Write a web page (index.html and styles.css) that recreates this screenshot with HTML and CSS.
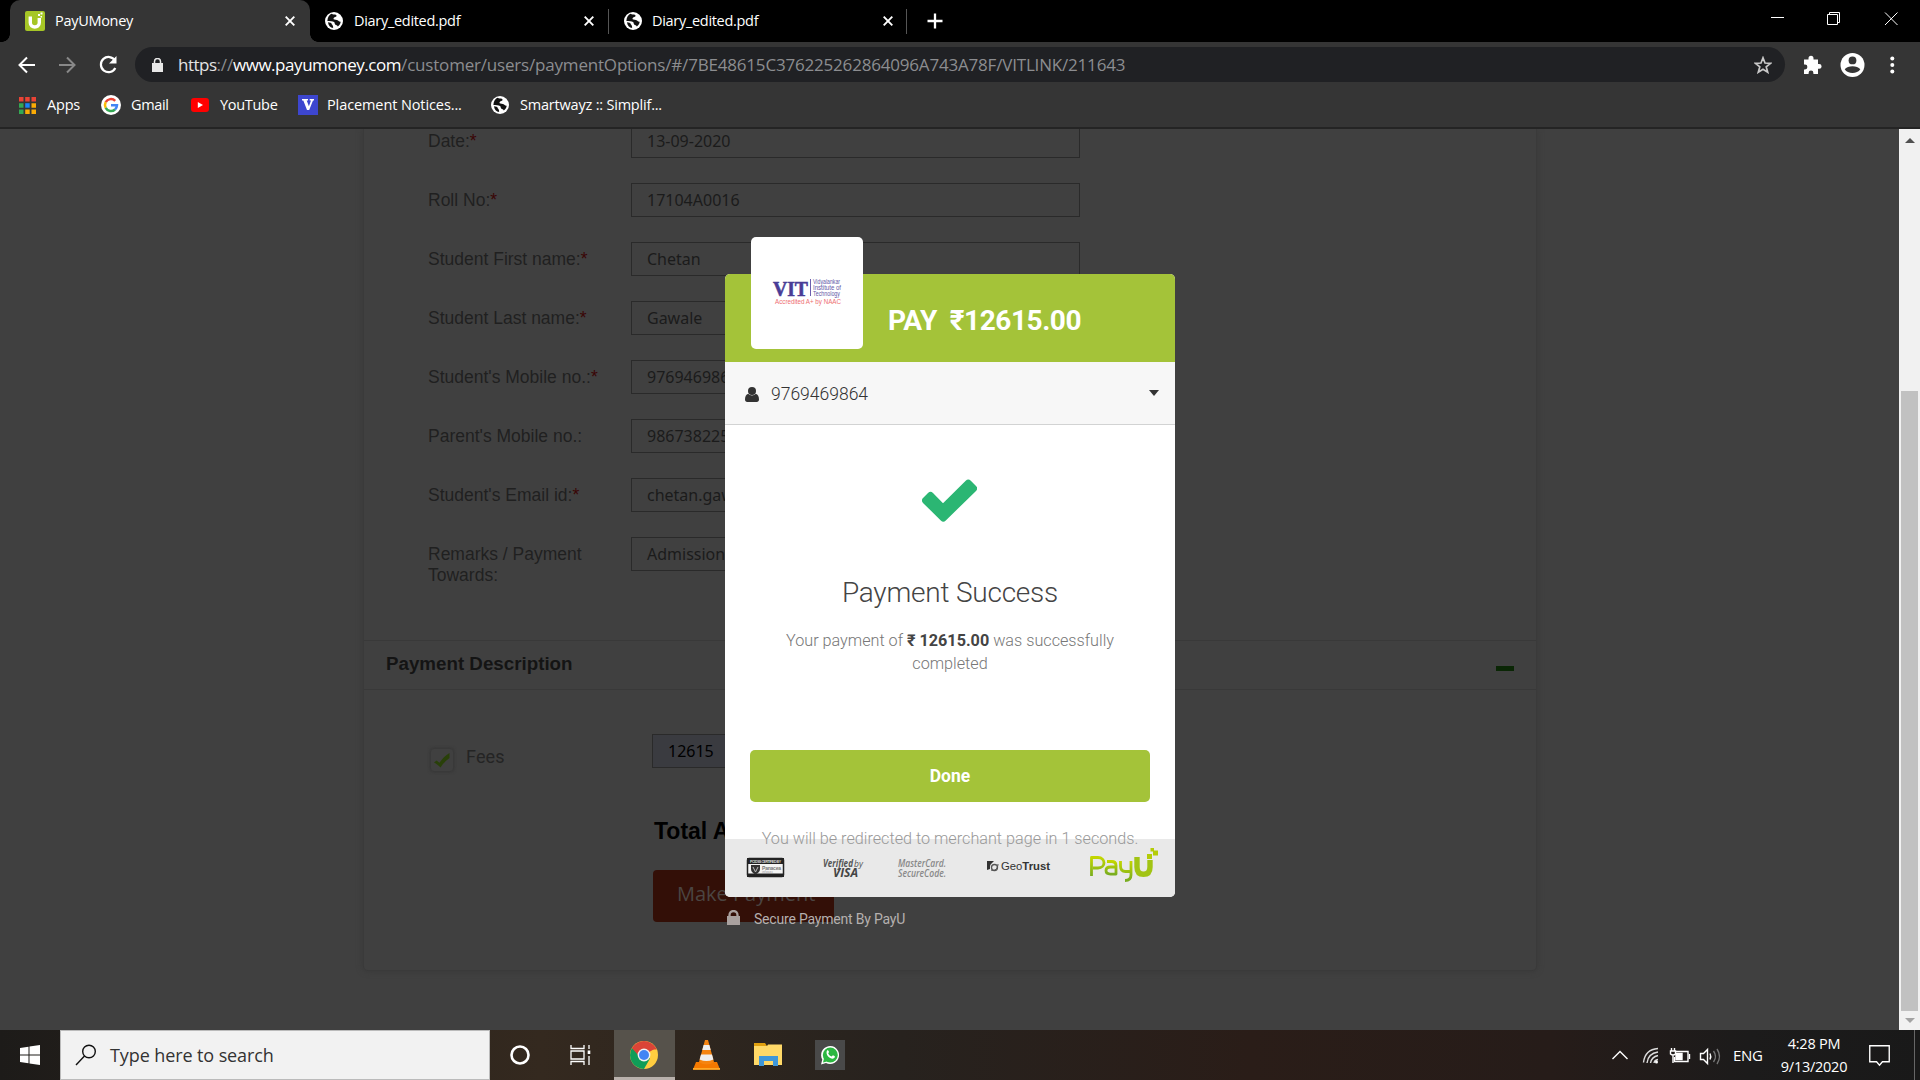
FILE: index.html
```html
<!DOCTYPE html>
<html lang="en">
<head>
<meta charset="utf-8">
<title>PayUMoney</title>
<link rel="stylesheet" href="styles.css">
</head>
<body>
<svg width="0" height="0" class="defs">
  <defs>
    <symbol id="globe" viewBox="0 0 18 18"><circle cx="9" cy="9" r="9" fill="#fff"/><path d="M6.2 1.8C8 3 11 2 11.5 3.6c.4 1.6-2.6 1.4-3 3-.3 1.200 1.700 1 3.500 1.300 1.800.4 1.600 2 3.700 1.800-.3 2-1.300 3.600-2.900 4.700-.3-1.400-1.800-1-2.600-1.900-.8-1-.2-1.900-1.200-2.600-1.400-1-3.800-.4-6.600-1 .1-3.400 1.700-5.800 3.800-7.100z" fill="#111"/><path d="M3 10.200c2 .2 3.300.4 3.600 1.600.3 1.200 1.800 1.400 1.500 4.200C5.400 15.600 3.300 13.400 3 10.200z" fill="#111"/><path d="M12.300 2.700c1.700 1 2.700 2.300 3.200 4.200-1.800.6-3.600-.6-3.200-2z" fill="#fff"/></symbol>
    <symbol id="close" viewBox="0 0 10 10"><path d="M.7.7l8.600 8.600M9.300.7L.7 9.300" stroke="#fff" stroke-width="1.900" fill="none"/></symbol>
    <linearGradient id="payu" x1="0" y1="0" x2="0" y2="1"><stop offset="0" stop-color="#c3d600"/><stop offset="1" stop-color="#79ad20"/></linearGradient>
  </defs>
</svg>
<div class="screen">
  <header class="tabs">
    <div class="tab active">
      <svg class="fav" viewBox="0 0 20 20"><rect width="20" height="20" rx="2" fill="#a6c626"/><path d="M5.300 5.500v6.300c0 5.500 9 5.500 9 0V7" fill="none" stroke="#fff" stroke-width="3.400"/><path d="M13 3h2v2h-2zM15.500 1.500h2v2h-2zM15.500 5h1.500v1.500h-1.500z" fill="#fff"/></svg>
      <span class="t1">PayUMoney</span><svg class="x"><use href="#close"/></svg>
    </div>
    <div class="tab second"><svg class="globe"><use href="#globe"/></svg><span>Diary_edited.pdf</span><svg class="x"><use href="#close"/></svg></div>
    <div class="tab third"><svg class="globe"><use href="#globe"/></svg><span>Diary_edited.pdf</span><svg class="x"><use href="#close"/></svg></div>
    <svg class="plus" viewBox="0 0 16 16"><path d="M8 .5v15M.5 8h15" stroke="#fff" stroke-width="2.300"/></svg>
    <svg class="wincontrols" viewBox="0 0 130 16" fill="none" stroke="#fff"><path d="M1 6.500h13M57.500 3.500h10v10h-10zM59.500 3.500v-2h10v10h-2M115 1.500l12.500 12.500M127.500 1.500L115 14"/></svg>
  </header>

  <nav class="toolbar">
    <svg class="navicons" viewBox="0 0 100 20" fill="none" stroke-width="2"><path d="M17 10H2M9 2.500L1.500 10 9 17.500" stroke="#fff"/><path d="M41 10h15M49 2.500l7.500 7.500-7.500 7.500" stroke="#888"/><path d="M97 5.600A7.600 7.600 0 1 0 97.300 13" stroke="#fff" stroke-width="2.200"/><path d="M98.500 1v7.500H91z" fill="#fff"/></svg>
    <div class="omnibox">
      <svg class="lock" viewBox="0 0 11 14"><path d="M0 5h11v9H0z" fill="#e8e8e8"/><path d="M2.500 6V3.500a3 3 0 0 1 6 0V6" fill="none" stroke="#e8e8e8" stroke-width="1.500"/></svg>
      <span class="url"><span class="scheme">https</span>://<b>www.payumoney.com</b>/customer/users/paymentOptions/#/7BE48615C376225262864096A743A78F/VITLINK/211643</span>
      <svg class="star" viewBox="0 0 18 18"><path d="M9 1.800l2 5.200 5.500.3-4.300 3.500 1.500 5.400L9 13.200l-4.700 3 1.500-5.400L1.500 7.300 7 7z" fill="none" stroke="#c8c8c8" stroke-width="1.700"/></svg>
    </div>
    <svg class="toolicons" viewBox="0 0 96 24" fill="#fff"><path d="M1 6.500h4.500V5.300a2.500 2.500 0 0 1 5 0v1.200H15V11h1.200a2.400 2.400 0 0 1 0 4.800H15V21h-4.600v-1a2.400 2.400 0 0 0-4.800 0v1H1v-4.600h1a2.400 2.400 0 0 0 0-4.800H1z"/><circle cx="49.500" cy="12" r="12"/><circle cx="49.500" cy="7.400" r="3.900" fill="#353535"/><path d="M41.700 16.200c3-4 12.600-4 15.600 0-3 5-12.600 5-15.600 0z" fill="#353535"/><circle cx="89.300" cy="5.500" r="2"/><circle cx="89.300" cy="12" r="2"/><circle cx="89.300" cy="18.500" r="2"/></svg>
  </nav>

  <nav class="bookmarks">
    <a class="b1"><svg viewBox="0 0 17 17"><path d="M0 0h4.500v4.500H0zM6.200 0h4.500v4.500H6.200zM12.500 0H17v4.500h-4.500z" fill="#ea4335"/><path d="M0 6.200h4.500v4.500H0zM0 12.500h4.500V17H0z" fill="#34a853"/><path d="M6.200 6.200h4.500v4.500H6.200z" fill="#1a84f8"/><path d="M12.500 6.200H17v4.500h-4.500zM6.200 12.500h4.500V17H6.200zM12.500 12.500H17V17h-4.500z" fill="#fbab05"/></svg><span>Apps</span></a>
    <a class="b2"><svg viewBox="0 0 20 20"><circle cx="10" cy="10" r="10" fill="#fff"/><g fill="none" stroke-width="2.500"><path d="M14.200 5.800A6 6 0 0 0 4.700 7.200" stroke="#ea4335"/><path d="M4.700 7.200a6 6 0 0 0 0 5.600" stroke="#fbbc05"/><path d="M4.700 12.800a6 6 0 0 0 9.300 1.700" stroke="#34a853"/><path d="M14 14.500a6 6 0 0 0 2-4.300h-6" stroke="#4285f4"/></g></svg><span>Gmail</span></a>
    <a class="b3"><svg viewBox="0 0 18 14"><rect width="18" height="14" rx="3" fill="#f00"/><path d="M6.800 4v6L12 7z" fill="#fff"/></svg><span>YouTube</span></a>
    <a class="b4"><svg viewBox="0 0 20 20"><rect width="20" height="20" fill="#3d46cf"/><path d="M4 4h6v1.500H8.700l2.200 5.800 2.100-5.800h-1.300V4H16v1.500h-1L11.200 15H9L5.300 5.500H4z" fill="#fff"/></svg><span>Placement Notices...</span></a>
    <a class="b5"><svg><use href="#globe"/></svg><span>Smartwayz :: Simplif...</span></a>
  </nav>

  <main class="page">
    <section class="panel">
      <form class="fields">
        <div class="row"><label>Date:<i>*</i></label><div class="input">13-09-2020</div></div>
        <div class="row"><label>Roll No:<i>*</i></label><div class="input">17104A0016</div></div>
        <div class="row"><label>Student First name:<i>*</i></label><div class="input">Chetan</div></div>
        <div class="row"><label>Student Last name:<i>*</i></label><div class="input">Gawale</div></div>
        <div class="row"><label>Student's Mobile no.:<i>*</i></label><div class="input">9769469864</div></div>
        <div class="row"><label>Parent's Mobile no.:</label><div class="input">986738225</div></div>
        <div class="row"><label>Student's Email id:<i>*</i></label><div class="input">chetan.gaw</div></div>
        <div class="row"><label>Remarks / Payment Towards:</label><div class="input">Admission</div></div>
      </form>
      <div class="description"><h2>Payment Description</h2><span class="minus"></span></div>
      <div class="fees">
        <span class="checkbox"><svg viewBox="0 0 16 15"><path d="M0 9.500l2.500-2 3 2.300C8 6 11.500 2.200 15.500 0v5C12 7.500 9 10.500 6.500 14.500 4.500 12.500 2.500 10.500 0 9.500z" fill="#294009"/></svg></span>
        <span class="fees-label">Fees</span>
        <div class="input amount">12615</div>
      </div>
      <div class="total">Total Amount</div>
      <div class="make">Make Payment</div>
    </section>
    <aside class="scrollbar"><span class="up"></span><div class="thumb"></div><span class="down"></span></aside>

    <div class="modal">
      <div class="modal-head"><div class="tile"><svg viewBox="0 0 112 112"><text x="22" y="59" textLength="35" lengthAdjust="spacingAndGlyphs" class="vit">VIT</text><path d="M59.500 42v17" stroke="#6c5fae"/><g class="vit-name"><text x="62" y="47" textLength="27" lengthAdjust="spacingAndGlyphs">Vidyalankar</text><text x="62" y="53" textLength="28" lengthAdjust="spacingAndGlyphs">Institute of</text><text x="62" y="59" textLength="27" lengthAdjust="spacingAndGlyphs">Technology</text></g><text x="24" y="67" textLength="66" lengthAdjust="spacingAndGlyphs" class="vit-sub">Accredited A+ by NAAC</text></svg></div><h1>PAY&nbsp; ₹12615.00</h1></div>
      <div class="user"><svg class="person" viewBox="0 0 14 15"><circle cx="7" cy="4" r="4"/><path d="M3.300 6.800C1 7.500 0 9.500 0 12.500 0 14 .8 15 2.300 15h9.400c1.500 0 2.300-1 2.300-2.500 0-3-1-5-3.300-5.700-2 2.100-5.400 2.100-7.400 0z"/></svg><span>9769469864</span><i class="caret"></i></div>
      <div class="modal-body">
        <svg class="check" viewBox="0 0 55 42"><path d="M1 18.600l5-5c1.700-1.700 3.400-1.700 5 0l10 10.200L43.700 1.200c1.700-1.600 3.500-1.600 5.100 0l5.200 5.200c1.600 1.600 1.600 3.300 0 5L23.800 41c-1.700 1.600-3.300 1.600-5 0L1 23.400c-1.500-1.600-1.500-3.200 0-4.800z" fill="#2bb673"/></svg>
        <h3>Payment Success</h3>
        <p class="message">Your payment of <b>₹ 12615.00</b> was successfully<br>completed</p>
        <button>Done</button>
        <p class="redirect">You will be redirected to merchant page in 1 seconds.</p>
      </div>
      <div class="badges">
        <svg viewBox="0 0 450 57">
          <rect x="22.500" y="19.500" width="36" height="18" rx="1.500" fill="#f4f4f4" stroke="#222" stroke-width="1.500"/><path d="M22 19h37v6H22zM22 34.500h37V38H22z" fill="#222"/><text x="25" y="24" class="micro" textLength="31">PCI DSS CERTIFIED BY</text><path d="M26 26h9v4c0 3-2 4-4.500 5.500C28 34 26 33 26 30z" fill="#333"/><path d="M28 28l2.500 5 2.500-5" fill="none" stroke="#bbb"/><text x="37" y="30.500" class="pan" textLength="19">Panacea</text><text x="37" y="34" class="pan2" textLength="11">infosec</text>
          <text x="98" y="28" class="verified" textLength="30" lengthAdjust="spacingAndGlyphs">Verified</text><text x="129" y="28" class="by" textLength="9">by</text><text x="108" y="37.500" class="visa" textLength="25" lengthAdjust="spacingAndGlyphs">VISA</text>
          <text x="173" y="28" class="mc" textLength="48" lengthAdjust="spacingAndGlyphs">MasterCard.</text><text x="173" y="37.500" class="mc" textLength="48" lengthAdjust="spacingAndGlyphs">SecureCode.</text>
          <path d="M262 22h7l-2.500 2.500c-1.600 1.300-1.500 3-1.500 5.500l-3 1z" fill="#333"/><circle cx="269.500" cy="28.500" r="3" fill="none" stroke="#555" stroke-width="1.300"/><path d="M266 31c4 2 7-2 7-6" fill="none" stroke="#555"/><text x="276" y="31" class="geo" textLength="49" lengthAdjust="spacingAndGlyphs">Geo<tspan font-weight="700">Trust</tspan></text>
          <g fill="none" stroke="url(#payu)" stroke-width="2.800" stroke-linejoin="round"><path d="M366.500 37V18.500h6.500c8 0 8 10.500 0 10.500h-5"/><path d="M382 22.500h4.500q4.500 0 4.500 4v8.600h-5.500q-4.500 0-4.500-3.500 0-3.600 4.500-3.600h5"/><path d="M395.500 22v5q0 5.500 5 5.500h5.500M406 22v14q0 5.500-6 5.500"/></g><path d="M412 18v10q0 7.300 6.500 7.300t6.500-7.300v-7" fill="none" stroke="#a2c414" stroke-width="5.400"/><path d="M422 15h5v5h-5zM428 11.500h5v5h-5zM425.500 9h3.500v3.500h-3.500z" fill="#b4cc08"/>
        </svg>
      </div>
    </div>
    <div class="secure"><svg viewBox="0 0 13 15"><path d="M0 6h13v9H0z" fill="#a9a19f"/><path d="M2.500 7V5a4 4 0 0 1 8 0v2" fill="none" stroke="#a9a19f" stroke-width="2.300"/></svg><span>Secure Payment By PayU</span></div>
  </main>

  <footer class="taskbar">
    <div class="start"><svg viewBox="0 0 20 20" fill="#fff"><path d="M0 3l8.500-1.300v7.800H0zM9.500 1.500L20 0v9.500H9.500zM0 10.500h8.500v7.800L0 17zM9.500 10.500H20V20L9.500 18.500z"/></svg></div>
    <div class="search"><svg viewBox="0 0 22 22" fill="none" stroke="#111" stroke-width="1.400"><circle cx="14" cy="7.500" r="6.300"/><path d="M9.500 12L1 21"/></svg><span>Type here to search</span></div>
    <div class="slot"><svg width="20" height="20"><circle cx="10" cy="10" r="8.500" fill="none" stroke="#fff" stroke-width="2.600"/></svg></div>
    <div class="slot"><svg width="22" height="20" fill="none" stroke="#fff" stroke-width="1.300"><path d="M1 0v3.500h13V0M1 20v-3.500h13V20M1 6h13v8H1zM19 0v4M19 11v9"/><path d="M19 5.500v3.500" stroke-width="2.600"/></svg></div>
    <div class="slot current"><svg width="28" height="28" viewBox="0 0 28 28"><circle cx="14" cy="14" r="14" fill="#ffcd40"/><path d="M14 14L1.880 7A14 14 0 0 0 14 28l6-10.500z" fill="#0f9d58"/><path d="M14 14H8L1.880 7a14 14 0 0 1 24.240 0z" fill="#db4437"/><path d="M14 7h12.100l.6 1.400H14z" fill="#db4437"/><circle cx="14" cy="14" r="6.400" fill="#f1f1f1"/><circle cx="14" cy="14" r="5" fill="#4285f4"/></svg></div>
    <div class="slot app"><svg width="27" height="30" viewBox="0 0 27 30"><path d="M3 22h21l3 7.500H0z" fill="#f57900"/><path d="M0 28h27v1.800H0z" fill="#ffa826"/><path d="M12 0h3l6 22q-7.500 5-15 0z" fill="#f58410"/><path d="M10.600 5h5.800l1.300 5H9.300zM8 14.500h11l1.400 5q-7 3-13.800 0z" fill="#eee"/></svg></div>
    <div class="slot app"><svg width="28" height="24" viewBox="0 0 28 24"><path d="M0 0h11l2 3H0z" fill="#e0a010"/><path d="M0 3h13l1-1.500h14V22H0z" fill="#ffd968"/><path d="M5 13h19v10h-5v-5h-9v5H5z" fill="#3f97d9"/></svg></div>
    <div class="slot app"><svg width="30" height="30" viewBox="0 0 30 30"><rect width="30" height="30" fill="#494949"/><path d="M6 24.500l1.300-5A9 9 0 1 1 11 23z" fill="#fff"/><circle cx="15.300" cy="15" r="7.500" fill="#2cb742"/><path d="M8 22.600l1-4 3 3z" fill="#2cb742"/><path d="M12 10.500c1-.7 1.600 0 2 1.600l-.8 1.300c.8 1.600 2 2.500 3.400 3.100l1.300-1.300c1.800.6 2.500 1 1.800 2.400-2 3.200-10.200-1.500-7.700-7.100z" fill="#fff"/></svg></div>
    <svg class="tray" viewBox="0 0 120 24" fill="none" stroke="#fff" stroke-width="1.400"><path d="M4.500 16l7.500-7.500 7.500 7.500"/><g stroke="#ddd"><path d="M35.500 19.500Q37 6.500 50 5.500M39 20q1-9.500 11-11M42.500 20q1-6 7.500-7.500M46 20q.5-3 4-3.500"/></g><circle cx="48.500" cy="19" r="1.500" fill="#fff" stroke="none"/><path d="M67 8.500h13v10H66.500V14"/><path d="M68 10.500h6v6h-6z" fill="#fff"/><path d="M81.500 11v5M62.500 8h5v3q-2.500 2-5 0zM63.500 5v3M66.500 5v3M65 12v8"/><path d="M92.500 10.500h3l4-4v14l-4-4h-3zM102 10.500q1.500 3 0 6"/><path d="M105.500 8q4 5.500 0 11M109 6q5 7.500 0 15" stroke="#777"/></svg>
    <span class="eng">ENG</span>
    <div class="clock"><span>4:28 PM</span><span>9/13/2020</span></div>
    <svg class="notice" viewBox="0 0 20 21" fill="none" stroke="#fff" stroke-width="1.300"><path d="M.7.700h18.600V16h-6.500L10 19.300 7.200 16H.7z"/></svg>
    <span class="peek"></span>
  </footer>
</div>
</body>
</html>
```
FILE: styles.css
```css
* { box-sizing: border-box; }
body { margin: 0; background: #404040; }
h1, h2, h3, p { margin: 0; }
svg { display: block; flex: none; }
.defs { position: absolute; }
.screen { width: 1920px; height: 1080px; overflow: hidden; display: flex; flex-direction: column; font-family: "Open Sans", "Noto Sans", sans-serif; color: #fff; }

.tabs { height: 42px; flex: none; background: #000; display: flex; align-items: center; padding-left: 10px; font-size: 14.5px; letter-spacing: -0.3px; }
.tab { height: 42px; display: flex; align-items: center; position: relative; }
.tab span { flex: 1; white-space: nowrap; margin-top: -2px; }
.active { width: 300px; background: #353535; border-radius: 10px 10px 0 0; padding: 0 15px; }
.active::before, .active::after { content: ""; position: absolute; bottom: 0; width: 8px; height: 8px; }
.active::before { left: -8px; background: radial-gradient(circle at 0 0, transparent 7.5px, #353535 8px); }
.active::after { right: -8px; background: radial-gradient(circle at 100% 0, transparent 7.5px, #353535 8px); }
.fav { width: 20px; height: 20px; margin-right: 10px; }
.globe { width: 18px; height: 18px; margin-right: 11px; }
.x { width: 10px; height: 10px; }
.second { width: 299px; padding: 0 15px; }
.third { width: 298px; padding: 0 14px 0 15px; }
.third .globe { margin-right: 10px; }
.second::after, .third::after { content: ""; position: absolute; right: 0; top: 9px; width: 1px; height: 25px; background: #555; }
.plus { width: 16px; height: 16px; margin-left: 20px; }
.wincontrols { width: 130px; height: 16px; margin: -5px 20px 0 auto; }

.toolbar { height: 45px; flex: none; background: #353535; display: flex; align-items: center; padding: 0 20px 0 18px; }
.navicons { width: 100px; height: 20px; margin-right: 17px; }
.omnibox { width: 1650px; height: 35px; border-radius: 18px; background: #202124; display: flex; align-items: center; padding: 0 13px 0 17px; }
.lock { width: 11px; height: 14px; margin-right: 15px; }
.url { flex: 1; white-space: nowrap; font-size: 17px; letter-spacing: -0.19px; color: #8c8d90; margin-top: -1px; }
.url b { font-weight: 400; letter-spacing: -0.45px; color: #fff; }
.scheme { color: #e4e4e4; letter-spacing: -0.5px; }
.star { width: 18px; height: 18px; }
.toolicons { width: 96px; height: 24px; margin-left: 18px; }

.bookmarks { height: 42px; flex: none; background: #353535; border-bottom: 2px solid #242424; display: flex; align-items: center; padding: 0 0 4px 19px; font-size: 14.5px; letter-spacing: -0.2px; }
.bookmarks a { display: flex; align-items: center; white-space: nowrap; }
.bookmarks span { margin-top: -2px; }
.b1 { width: 82px; } .b1 svg { width: 17px; height: 17px; margin-right: 11px; }
.b2 { width: 90px; letter-spacing: -0.35px; } .b2 svg { width: 20px; height: 20px; margin-right: 10px; }
.b3 { width: 107px; letter-spacing: -0.3px; } .b3 svg { width: 18px; height: 14px; margin-right: 11px; }
.b4 { width: 193px; letter-spacing: -0.1px; } .b4 svg { width: 20px; height: 20px; margin-right: 9px; }
.b5 svg { width: 18px; height: 18px; margin-right: 11px; }

.page { height: 901px; flex: none; background: #404040; position: relative; display: flex; overflow: hidden; }
.panel { width: 1174px; height: 842px; margin-left: 363px; border: 1px solid #3a3a3a; border-top: 0; border-radius: 0 0 5px 5px; box-shadow: 0 0 6px #383838; }
.fields { height: 511px; padding-left: 64px; margin-top: -5px; }
.row { height: 59px; display: flex; align-items: flex-start; }
.row label { width: 203px; padding: 7px 40px 0 0; font: 17.5px/21px "Liberation Sans", Arial, sans-serif; color: #202020; white-space: nowrap; }
.row:last-child label { white-space: normal; padding-right: 20px; }
.row i { font-style: normal; color: #3a0505; }
.input { width: 449px; height: 34px; border: 1px solid #2a2a2a; padding: 0 15px; font: 16px/33px "Noto Sans", sans-serif; color: #1b1b1b; }
.description { height: 50px; margin-top: 5px; border: solid #393939; border-width: 1px 0; padding: 0 22px 2px; display: flex; align-items: center; justify-content: space-between; }
.description h2 { font: bold 18.75px/22px "Liberation Sans", Arial, sans-serif; color: #141414; }
.minus { width: 18px; height: 5px; background: #0a2605; margin-top: 8px; }
.fees { display: flex; padding: 44px 0 0 66px; }
.checkbox { width: 24px; height: 24px; margin: 14px 12px 0 0; border: 1px solid #393939; border-radius: 4px; box-shadow: 0 0 3px #333; padding: 4px 3px; }
.checkbox svg { width: 16px; height: 15px; }
.fees-label { width: 186px; font: 18px/22px Roboto, sans-serif; letter-spacing: .15px; color: #242424; padding-top: 12px; }
.amount { background: #3a3b40; color: #000; }
.total { font: bold 23px/28px "Liberation Sans", Arial, sans-serif; color: #000; margin: 45px 0 0 290px; }
.make { width: 181px; height: 52px; margin: 25px 0 0 289px; border-radius: 4px; background: #330f07; color: #4b4542; font: 20px/48px "Open Sans", sans-serif; padding-left: 24px; white-space: nowrap; }
.scrollbar { width: 21px; margin-left: auto; background: #f1f1f1; display: flex; flex-direction: column; align-items: center; justify-content: space-between; padding: 9px 0 7px; }
.up, .down { border: solid transparent; border-width: 0 5px 5px; border-bottom-color: #505050; }
.down { border-width: 5px 5px 0; border-top-color: #a3a3a3; }
.thumb { width: 17px; height: 620px; margin-top: 241px; background: #c1c1c1; }

.modal { position: absolute; left: 725px; top: 145px; width: 450px; height: 623px; border-radius: 5px; background: #fff; font-family: Roboto, sans-serif; }
.modal-head { height: 88px; background: #a4c339; border-radius: 5px 5px 0 0; display: flex; padding-left: 26px; }
.tile { width: 112px; height: 112px; margin: -37px 25px 0 0; border-radius: 5px; background: #fff; }
.vit { font: bold 22px "Liberation Serif", serif; fill: #493c96; stroke: #493c96; stroke-width: .6px; }
.vit-name { font: 7px "Liberation Sans", sans-serif; fill: #6257a6; }
.vit-sub { font: 7px "Liberation Sans", sans-serif; fill: #ee6e72; }
.modal h1 { font-size: 28px; line-height: 33px; font-weight: 700; letter-spacing: -.45px; padding-top: 30px; white-space: nowrap; }
.user { height: 63px; background: #f7f7f7; border-bottom: 1px solid #d2d3d3; display: flex; align-items: center; padding: 0 16px 0 20px; color: #333; font-size: 17.5px; font-weight: 300; }
.user span { margin-top: 2px; }
.person { width: 14px; height: 15px; margin: 3px 12px 0 0; fill: #333; }
.caret { margin-left: auto; border: solid transparent; border-width: 6px 5.500px 0; border-top-color: #333; }
.modal-body { height: 414px; padding: 54px 25px 0; text-align: center; position: relative; z-index: 1; }
.check { width: 55px; height: 43px; margin: 0 0 0 172px; }
.modal h3 { font-size: 28px; line-height: 34px; font-weight: 300; letter-spacing: -.22px; color: #444; margin-top: 54px; }
.message { margin-top: 19px; font-size: 16.2px; line-height: 23px; font-weight: 300; color: #777; }
.message b { font-weight: 700; color: #444; }
.modal button { display: block; width: 400px; height: 52px; margin: 75px 0 0; padding: 0; border: 0; border-radius: 5px; background: #a4c339; color: #fff; font: 700 17.5px Roboto, sans-serif; }
.redirect { margin-top: 25px; font-size: 16.2px; line-height: 23px; font-weight: 300; color: #999; white-space: nowrap; }
.badges { height: 58px; background: #e9e9e9; border-radius: 0 0 5px 5px; }
.badges svg { width: 450px; height: 57px; }
.micro { font: bold 3.500px "Liberation Sans", sans-serif; fill: #ddd; }
.pan { font: bold 5px "Liberation Sans", sans-serif; fill: #777; }
.pan2 { font: 3px "Liberation Sans", sans-serif; fill: #888; }
.verified { font: italic bold 10px "Open Sans", sans-serif; fill: #555; }
.by { font: italic 8.500px "Open Sans", sans-serif; fill: #555; }
.visa { font: italic bold 11.500px "Open Sans", sans-serif; fill: #444; }
.mc { font: italic 600 10px "Open Sans", sans-serif; fill: #888; }
.geo { font: 11.500px "Liberation Sans", sans-serif; fill: #333; }
.secure { position: absolute; left: 727px; top: 780px; display: flex; align-items: center; gap: 14px; font: 14px/20px Roboto, sans-serif; letter-spacing: -.2px; color: #b5b0af; }
.secure svg { width: 13px; height: 15px; margin-top: -3px; }

.taskbar { height: 50px; flex: none; display: flex; align-items: center; background: linear-gradient(90deg, #1d1b19 0, #34291f 540px, #27221e 900px, #2a1d18 1250px, #261c19 1550px, #1c1b1b 1750px, #191919); }
.start { width: 60px; padding-left: 20px; }
.start svg { width: 20px; height: 20px; }
.search { width: 430px; height: 50px; background: #f2f2f2; border: 1px solid #bbb; color: #333; display: flex; align-items: center; gap: 13px; padding-left: 14px; font-size: 18px; letter-spacing: -.1px; white-space: nowrap; }
.search svg { width: 22px; height: 22px; }
.slot { width: 60px; height: 50px; display: flex; align-items: center; justify-content: center; }
.slot + .slot { width: 64px; padding-right: 2px; }
.slot + .slot.current { width: 61px; background: #56524b; border-bottom: 3px solid #b9b1ac; padding: 3px 2px 0 0; }
.slot + .slot.app { width: 62px; padding: 0; }
.tray { width: 120px; height: 24px; margin-left: auto; }
.eng { width: 44px; padding-left: 5px; font-size: 15px; letter-spacing: -.3px; }
.clock { width: 84px; display: flex; flex-direction: column; align-items: center; font-size: 14.500px; line-height: 23px; letter-spacing: -.25px; }
.notice { width: 21px; height: 22px; margin: 1px 24px 0 13px; }
.peek { width: 1px; height: 50px; background: #666; margin-right: 5px; }
```
